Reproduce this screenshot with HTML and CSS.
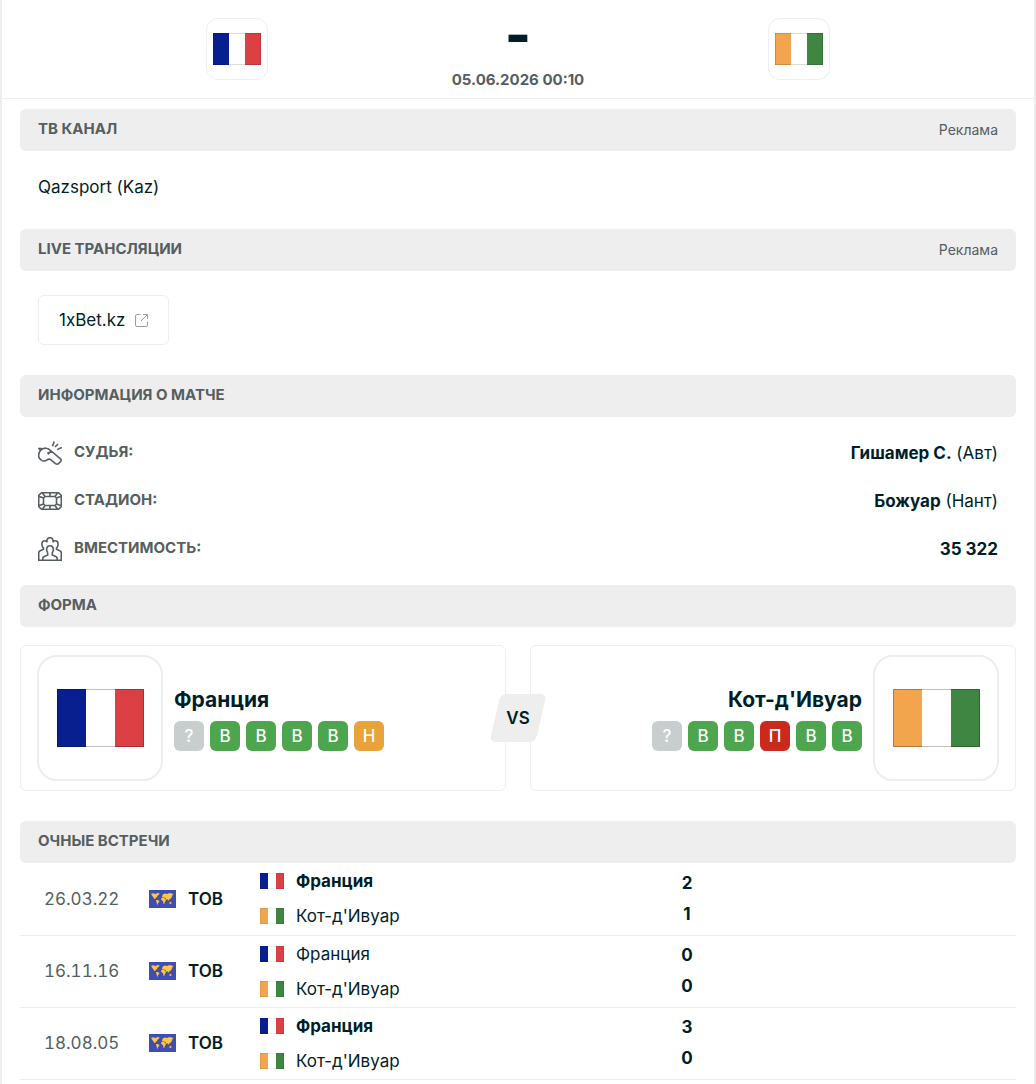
FILE: index.html
```
<!DOCTYPE html>
<html lang="ru">
<head>
	<meta charset="utf-8">
	<meta name="viewport" content="width=device-width, initial-scale=1.0">
	<title>Франция - Кот-д'Ивуар</title>
	<link rel="stylesheet" href="styles.css">
</head>
<body>
	<!-- shared icons -->
	<svg class="sprite" aria-hidden="true">
		<symbol id="fr" viewBox="0 0 87 58" preserveAspectRatio="none">
			<rect width="87" height="58" fill="#fff"/>
			<rect width="29" height="58" fill="#08208f"/>
			<rect x="58" width="29" height="58" fill="#da4044"/>
			<rect width="87" height="58" fill="none" stroke="#000" stroke-opacity=".25" stroke-width="2"/>
		</symbol>
		<symbol id="ci" viewBox="0 0 87 58" preserveAspectRatio="none">
			<rect width="87" height="58" fill="#fff"/>
			<rect width="29" height="58" fill="#f2a54c"/>
			<rect x="58" width="29" height="58" fill="#3e8641"/>
			<rect width="87" height="58" fill="none" stroke="#000" stroke-opacity=".25" stroke-width="2"/>
		</symbol>
		<symbol id="world" viewBox="0 0 27 18">
			<rect width="27" height="18" fill="#414eb1"/>
			<g fill="#fbc546">
				<path d="M2 4L4 3.200 7 4 8.500 3 10.500 3.200 9.800 5 8.800 5.200 7.800 7.200 6.500 8 6.200 9.200 5 8.600 3.800 6.500Z"/>
				<path d="M7 10L9 10 10.500 11.200 9.500 12.800 8.800 13.600 8.300 15.500 7.600 12.500Z"/>
				<path d="M13 6.500L13.800 4.500 16 3.500 18 4 20.500 3 24.500 4 23.500 5 22.800 7 21.500 8.800 20 9.600 19.600 11 18.600 9.200 17.600 10 16.800 8.500 15.500 7.500 13.200 7.600Z"/>
				<path d="M12.300 8L15 7.800 17 9.800 16.200 11.500 15.500 13.200 14.700 14.200 13.900 11 12.300 10Z"/>
				<path d="M20.500 12.200L22 11.800 22.600 13.300 21.500 13.900 20.400 13.400Z"/>
			</g>
		</symbol>
	</svg>

	<main class="page">
		<header class="match">
			<a href="#" class="match-logo" aria-label="Франция"><svg><use href="#fr"/></svg></a>
			<div class="match-info">
				<div class="match-score">-</div>
				<div class="match-time">05.06.2026 00:10</div>
			</div>
			<a href="#" class="match-logo" aria-label="Кот-д'Ивуар"><svg><use href="#ci"/></svg></a>
		</header>

		<section>
			<h2 class="title">ТВ КАНАЛ <span>Реклама</span></h2>
			<p class="channel">Qazsport (Kaz)</p>
		</section>

		<section>
			<h2 class="title">LIVE ТРАНСЛЯЦИИ <span>Реклама</span></h2>
			<div class="streams">
				<a href="#" class="stream">1xBet.kz
					<svg viewBox="0 0 13 13" fill="none" stroke="#9a9fa1">
						<path d="M5.500.5H2Q.5.5.5 2V11Q.5 12.500 2 12.500H11Q12.500 12.500 12.500 11V7.500M8 .5H12.500V5M12.500.5L6 7"/>
					</svg>
				</a>
			</div>
		</section>

		<section>
			<h2 class="title">ИНФОРМАЦИЯ О МАТЧЕ</h2>
			<dl class="info">
				<div class="info-row">
					<dt>
						<svg viewBox="0 0 24 24">
							<path d="M2.500 9.500C4 7.800 6 7 8 7.200 10 7.200 11 8 12 9L22.500 17.800C23.500 18.800 23.300 19.800 22.300 20.900L20.500 22.600C19.500 23.400 18.500 23.300 17.500 22.600L12.600 18.600C11.300 17.800 10 18.200 8.700 19.200 6 20.800 2.800 19.500 1.200 17 .2 14.500.8 11.500 2.500 9.500ZM9.500 12.800L13.500 9.800M9.500 11.500L11.500 13M2.500 9.500L1 7.500H4M14.500 5.300L16.200.5M17 6L20 3M19.200 8.600L23.800 6.400"/>
						</svg>
						<span>СУДЬЯ:</span>
					</dt>
					<dd><b>Гишамер С.</b> (Авт)</dd>
				</div>
				<div class="info-row">
					<dt>
						<svg viewBox="0 0 24 24">
							<path d="M3.500 3.700H20.500L23.300 6.500V17.500L20.500 20.300H3.500L.7 17.500V6.500ZM7 7.500H17L18.500 9V15L17 16.500H7L5.500 15V9ZM1.500 7.500L5.500 9M4.500 4L7 7.500M22.500 7.500L18.500 9M19.500 4L17 7.500M1.500 16.500L5.500 15M4.500 20L7 16.500M22.500 16.500L18.500 15M19.500 20L17 16.500M12 3.700V7.500M12 16.500V20.300"/>
						</svg>
						<span>СТАДИОН:</span>
					</dt>
					<dd><b>Божуар</b> (Нант)</dd>
				</div>
				<div class="info-row">
					<dt>
						<svg viewBox="0 0 24 24">
							<path d="M9 5.500C8.500 2.500 9.800.7 12 .7S15.500 2.500 15 5.500M8.800 4.500C6.500 2.800 3.700 4.200 4 7 3.700 9 4.500 10.300 5.500 11.200V12.300L1.800 14Q.7 14.500.7 15.800V23.300H23.300V15.800Q23.300 14.500 22.200 14L18.500 12.300V11.200C19.500 10.300 20.300 9 20 7 20.300 4.200 17.500 2.800 15.200 4.500M9.700 15.500C8.500 14 8.500 12.500 8.700 11.500 9 9.700 10.200 8.800 12 8.800S15 9.700 15.300 11.500C15.500 12.500 15.500 14 14.300 15.500V18L18.200 19.800Q19.200 20.400 19.200 21.500V23M9.700 15.500V18L5.800 19.800Q4.800 20.400 4.800 21.500V23"/>
						</svg>
						<span>ВМЕСТИМОСТЬ:</span>
					</dt>
					<dd><b>35 322</b></dd>
				</div>
			</dl>
		</section>

		<section>
			<h2 class="title">ФОРМА</h2>
			<div class="form">
				<div class="team">
					<a href="#" class="team-logo" aria-label="Франция"><svg><use href="#fr"/></svg></a>
					<div class="team-text">
						<a href="#" class="team-name">Франция</a>
						<div class="badges">
							<button class="badge">?</button>
							<button class="badge win">В</button>
							<button class="badge win">В</button>
							<button class="badge win">В</button>
							<button class="badge win">В</button>
							<button class="badge draw">Н</button>
						</div>
					</div>
				</div>
				<div class="vs">VS</div>
				<div class="team away">
					<a href="#" class="team-logo" aria-label="Кот-д'Ивуар"><svg><use href="#ci"/></svg></a>
					<div class="team-text">
						<a href="#" class="team-name">Кот-д'Ивуар</a>
						<div class="badges">
							<button class="badge">?</button>
							<button class="badge win">В</button>
							<button class="badge win">В</button>
							<button class="badge lose">П</button>
							<button class="badge win">В</button>
							<button class="badge win">В</button>
						</div>
					</div>
				</div>
			</div>
		</section>

		<section>
			<h2 class="title">ОЧНЫЕ ВСТРЕЧИ</h2>
			<table class="h2h">
				<tr>
					<td class="date">26.03.22</td>
					<td class="event"><div><svg><use href="#world"/></svg>ТОВ</div></td>
					<td class="names">
						<div><svg><use href="#fr"/></svg><b>Франция</b></div>
						<div><svg><use href="#ci"/></svg>Кот-д'Ивуар</div>
					</td>
					<td class="result"><div>2</div><div>1</div></td>
				</tr>
				<tr>
					<td class="date">16.11.16</td>
					<td class="event"><div><svg><use href="#world"/></svg>ТОВ</div></td>
					<td class="names">
						<div><svg><use href="#fr"/></svg>Франция</div>
						<div><svg><use href="#ci"/></svg>Кот-д'Ивуар</div>
					</td>
					<td class="result"><div>0</div><div>0</div></td>
				</tr>
				<tr>
					<td class="date">18.08.05</td>
					<td class="event"><div><svg><use href="#world"/></svg>ТОВ</div></td>
					<td class="names">
						<div><svg><use href="#fr"/></svg><b>Франция</b></div>
						<div><svg><use href="#ci"/></svg>Кот-д'Ивуар</div>
					</td>
					<td class="result"><div>3</div><div>0</div></td>
				</tr>
			</table>
		</section>
	</main>
</body>
</html>
```
FILE: styles.css
```
*{
    box-sizing: border-box;
}
body{
    margin: 0;
    background-color: #fff;
    color: #001e28;
    font-family: Inter, "Liberation Sans", sans-serif;
    font-size: 17px;
    line-height: 24px;
}
a{
    color: inherit;
    text-decoration: none;
}
svg{
    display: block;
    flex: none;
}
.sprite{
    position: absolute;
    width: 0;
    height: 0;
}
.page{
    min-height: 100vh;
    border-left: 2px solid #eee;
    border-right: 2px solid #eee;
}

/* match header */
.match{
    display: grid;
    grid-template-columns: repeat(3, 1fr);
    justify-items: center;
    padding: 18px 95px;
    margin-bottom: 10px;
    border-bottom: 1px solid #eee;
}
.match-logo{
    display: flex;
    align-items: center;
    justify-content: center;
    width: 62px;
    height: 62px;
    border: 1px solid #eee;
    border-radius: 12px;
}
.match-logo svg{
    width: 48px;
    height: 32px;
}
.match-info{
    height: 62px;
    text-align: center;
    font-weight: bold;
}
.match-score{
    height: 50px;
    font-size: 56px;
    font-weight: 800;
    line-height: 34px;
}
.match-time{
    color: #555e61;
    font-size: 15px;
}

section{
    padding: 0 18px;
}
.title{
    display: flex;
    align-items: center;
    justify-content: space-between;
    height: 42px;
    margin: 0;
    padding: 0 18px 2px;
    background-color: #eee;
    border-radius: 6px;
    color: #555e61;
    font-size: 15px;
    font-weight: bold;
}
.title span{
    padding-top: 2px;
    font-size: 14px;
    font-weight: normal;
}

.channel{
    margin: 0;
    padding: 24px 18px 30px;
}
.streams{
    display: flex;
    padding: 24px 18px 30px;
}
.stream{
    display: flex;
    align-items: center;
    gap: 10px;
    height: 50px;
    padding: 0 20px;
    border: 1px solid #eee;
    border-radius: 6px;
}
.stream svg{
    width: 13px;
    height: 13px;
}

/* match information */
.info{
    margin: 0;
    padding: 12px 18px;
}
.info-row{
    display: flex;
    align-items: center;
    justify-content: space-between;
    height: 48px;
}
.info dt{
    display: flex;
    align-items: center;
    gap: 12px;
    color: #555e61;
    font-size: 15px;
    font-weight: bold;
}
.info dt svg{
    width: 24px;
    height: 24px;
    fill: none;
    stroke: #555e61;
    stroke-width: 1.6;
}
.info dt span{
    padding-bottom: 2px;
}
.info dd{
    margin: 0;
}

/* form */
.form{
    position: relative;
    z-index: 0;
    display: grid;
    grid-template-columns: 1fr 1fr;
    gap: 24px;
    padding: 18px 0 30px;
}
.team{
    display: flex;
    align-items: center;
    gap: 11px;
    height: 146px;
    padding: 0 16px;
    border: 1px solid #eee;
    border-radius: 6px;
}
.away{
    flex-direction: row-reverse;
}
.team-logo{
    display: flex;
    align-items: center;
    justify-content: center;
    width: 126px;
    height: 126px;
    border: 2px solid #eee;
    border-radius: 20px;
}
.team-logo svg{
    width: 87px;
    height: 58px;
}
.team-text{
    padding-top: 3px;
}
.away .team-text{
    text-align: right;
}
.team-name{
    display: block;
    margin-bottom: 9px;
    font-size: 21px;
    font-weight: bold;
}
.badges{
    display: flex;
    gap: 6px;
}
.badge{
    width: 30px;
    height: 30px;
    padding: 0;
    border: none;
    border-radius: 6px;
    background-color: #c8cdcd;
    color: #fff;
    font-family: inherit;
    font-size: 17px;
    font-weight: 500;
    cursor: pointer;
}
.win{
    background-color: #4da64d;
}
.draw{
    background-color: #e8a33b;
}
.lose{
    background-color: #cb291c;
}
.vs{
    position: absolute;
    top: 67px;
    left: 50%;
    width: 46px;
    margin-left: -23px;
    line-height: 48px;
    text-align: center;
    font-weight: 600;
}
.vs::before{
    content: "";
    position: absolute;
    inset: 0;
    z-index: -1;
    background-color: #eee;
    border-radius: 6px;
    transform: skewX(-13deg);
}

/* head to head */
.h2h{
    width: 100%;
    border-collapse: collapse;
    table-layout: fixed;
}
.h2h td{
    height: 72px;
    padding: 0;
    border-bottom: 1px solid #eee;
}
.h2h .date{
    width: 129px;
    padding-left: 24px;
    color: #555e61;
    font-variant-numeric: tabular-nums;
}
.h2h .event{
    width: 111px;
    font-weight: 600;
}
.event div{
    display: flex;
    align-items: center;
    gap: 12px;
}
.event svg{
    width: 27px;
    height: 18px;
}
.names div{
    display: flex;
    align-items: center;
    gap: 12px;
    height: 35px;
}
.names svg{
    width: 24px;
    height: 16px;
}
.h2h .result{
    width: 344px;
    font-weight: bold;
}
.result div{
    width: 30px;
    line-height: 31px;
    text-align: center;
}
```
